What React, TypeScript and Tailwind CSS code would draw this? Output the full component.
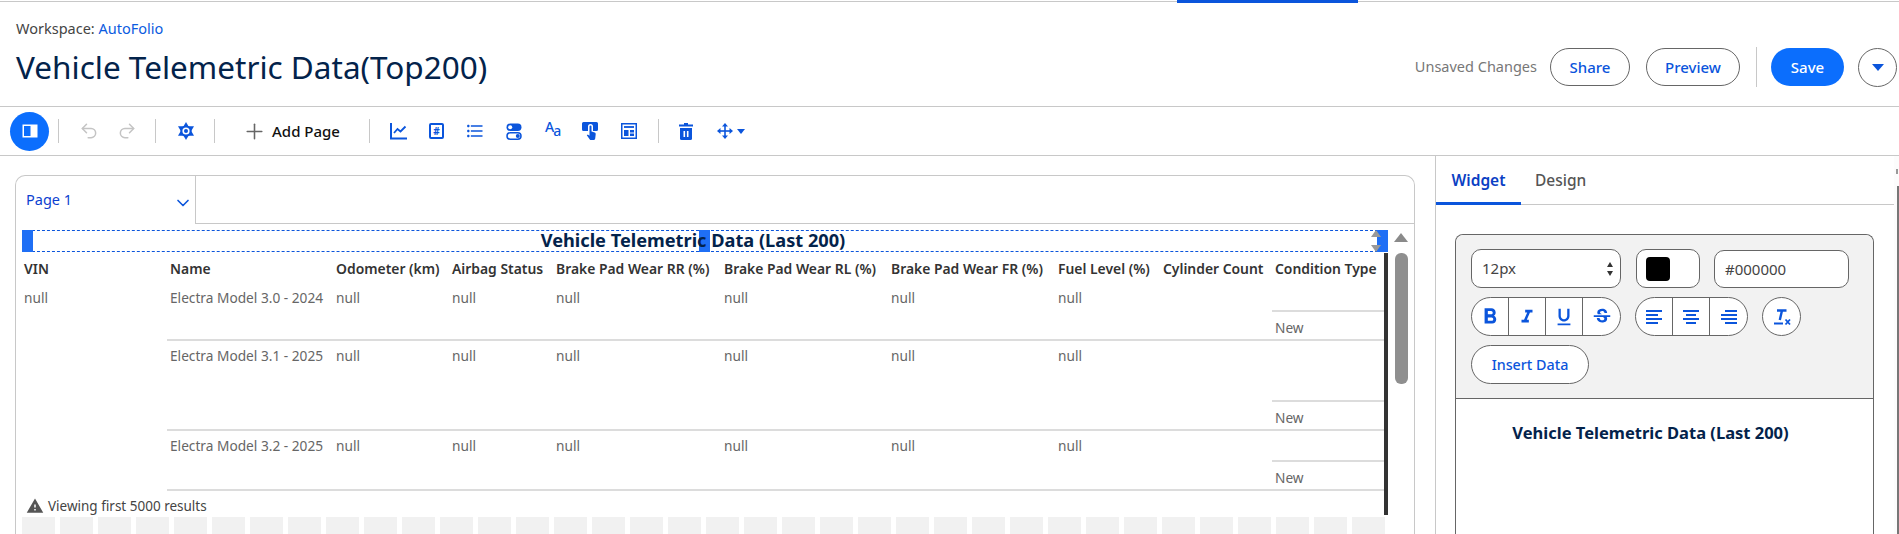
import React from "react";
import { Undo2, Redo2, Plus, ChevronDown } from "lucide-react";
import {
  MdFormatListBulleted,
  MdFormatBold,
  MdFormatItalic,
  MdFormatUnderlined,
  MdStrikethroughS,
  MdWarning,
} from "react-icons/md";

const BLUE = "text-[#0b55dc]";

const Divider = ({ className = "" }: { className?: string }) => (
  <div className={`w-px h-6 bg-[#c8c8c8] ${className}`} />
);

const GearIcon = () => (
  <svg width="16" height="18" viewBox="0 0 16 18">
    <path d="M8 0l8 13.800H0z" fill="#0b55dc" />
    <path d="M8 18L0 4.200h16z" fill="#0b55dc" />
    <circle cx="8" cy="9" r="5.500" fill="#0b55dc" />
    <circle cx="8" cy="9" r="3.600" fill="#fff" />
    <circle cx="8" cy="9" r="2" fill="#0b55dc" />
  </svg>
);

const ChartIcon = () => (
  <svg width="18" height="18" viewBox="0 0 18 18" fill="none" stroke="#0b55dc" strokeWidth="2">
    <path d="M1 1v15.500h16" />
    <path d="M4 11l3.500-4 3 2.500L15.500 4.500" strokeWidth="1.800" />
  </svg>
);

const HashIcon = () => (
  <div className={`w-[15px] h-[16px] border-2 border-[#0b55dc] rounded-[2px] flex items-center justify-center text-[10px] font-bold leading-none ${BLUE}`}>
    #
  </div>
);

const ToggleIcon = () => (
  <svg width="16" height="17" viewBox="0 0 16 17">
    <rect x="0.500" y="0.500" width="15" height="7.500" rx="3.700" fill="#0b55dc" />
    <circle cx="4.200" cy="4.200" r="2" fill="#fff" />
    <rect x="1" y="9.700" width="14" height="6.500" rx="3.200" fill="none" stroke="#0b55dc" strokeWidth="1.500" />
    <circle cx="11.800" cy="13" r="2" fill="#0b55dc" />
  </svg>
);

const TouchIcon = () => (
  <svg width="16" height="18" viewBox="0 0 16 18" fill="#0b55dc">
    <path d="M1.500 0h13A1.500 1.500 0 0 1 16 1.500v6A1.500 1.500 0 0 1 14.500 9H11V4.500a2.500 2.500 0 0 0-5 0V9H1.500A1.500 1.500 0 0 1 0 7.500v-6A1.500 1.500 0 0 1 1.500 0z" />
    <path d="M7.500 4.500a1 1 0 0 1 2 0V9.500l3.200 1c.8.300 1.100.9 1 1.700l-.5 4.300c-.1.900-.7 1.500-1.600 1.500H9c-.5 0-.9-.2-1.200-.6L4.800 13.300l1-.9 1.700 1.300z" />
  </svg>
);

const LayoutIcon = () => (
  <svg width="16" height="16" viewBox="0 0 16 16" fill="none" stroke="#0b55dc">
    <rect x="0.750" y="0.750" width="14.500" height="14.500" strokeWidth="1.500" />
    <path d="M3 4h10" strokeWidth="1.800" />
    <rect x="3" y="7" width="4.500" height="6" fill="#0b55dc" stroke="none" />
    <rect x="9" y="7" width="4" height="2.500" fill="#0b55dc" stroke="none" />
    <rect x="9" y="10.500" width="4" height="2.500" fill="#0b55dc" stroke="none" />
  </svg>
);

const TrashIcon = () => (
  <svg width="14" height="17" viewBox="0 0 14 17" fill="#0b55dc">
    <path d="M5 0h4v1.500h5V3.500H0V1.500h5z" />
    <path d="M1 5h12v10.500a1.500 1.500 0 0 1-1.500 1.500h-9A1.500 1.500 0 0 1 1 15.500z" />
    <rect x="4.500" y="8" width="1.600" height="6" fill="#fff" />
    <rect x="7.900" y="8" width="1.600" height="6" fill="#fff" />
  </svg>
);

const MoveIcon = () => (
  <svg width="16" height="16" viewBox="0 0 16 16" fill="#0b55dc">
    <path d="M7.200 3h1.600v10H7.200z" />
    <path d="M3 7.200h10v1.600H3z" />
    <path d="M8 0l3 3.500H5z" />
    <path d="M8 16l-3-3.500h6z" />
    <path d="M0 8l3.500-3v6z" />
    <path d="M16 8l-3.500 3V5z" />
  </svg>
);

const AlignIcon = ({ lines }: { lines: string[] }) => (
  <svg width="18" height="16" viewBox="0 0 18 16" fill="none" stroke="#0b55dc" strokeWidth="2">
    {lines.map((d) => (
      <path key={d} d={d} />
    ))}
  </svg>
);

const Toolbar = () => (
  <div className="h-[49px] border-b border-[#c8c8c8] flex items-center pl-[10px]">
    <button className="w-[39px] h-[39px] rounded-full bg-[#0b6efd] flex items-center justify-center">
      <svg width="16" height="14" viewBox="0 0 16 14">
        <rect x="0.500" y="0.500" width="15" height="13" fill="#fff" />
        <rect x="2" y="2" width="6.500" height="10" fill="#0b6efd" />
      </svg>
    </button>
    <Divider className="ml-[9px]" />
    <Undo2 size={20} strokeWidth={1.800} className="ml-[20px] text-[#c4c4c4]" />
    <Redo2 size={20} strokeWidth={1.800} className="ml-[18px] text-[#c4c4c4]" />
    <Divider className="ml-[18px]" />
    <div className="ml-[22px]"><GearIcon /></div>
    <Divider className="ml-[20px]" />
    <Plus size={25} strokeWidth={1.500} className="ml-[27px] text-[#666]" />
    <span className="ml-[5px] w-[97px] text-[15px] font-medium text-[#111]">Add Page</span>
    <Divider />
    <div className="ml-[20px] w-[18px]"><ChartIcon /></div>
    <div className="ml-[21px]"><HashIcon /></div>
    <MdFormatListBulleted size={20} className={`ml-[21px] ${BLUE}`} />
    <div className="ml-[21px]"><ToggleIcon /></div>
    <div className={`ml-[23px] w-[16px] flex items-end leading-none font-medium ${BLUE}`}>
      <span className="text-[14px] -mt-[5px] mb-[4px]">A</span>
      <span className="text-[14px] -ml-[1px]">a</span>
    </div>
    <div className="ml-[21px]"><TouchIcon /></div>
    <div className="ml-[23px]"><LayoutIcon /></div>
    <Divider className="ml-[21px]" />
    <div className="ml-[20px]"><TrashIcon /></div>
    <div className="ml-[24px]"><MoveIcon /></div>
    <span className="ml-[4px] w-0 h-0 border-x-[4px] border-x-transparent border-t-[5px] border-t-[#0b55dc]" />
  </div>
);

const Header = () => (
  <div className="relative h-[106px] border-t border-[#c8c8c8] border-b flex justify-between pl-4 pr-[2px] mt-px">
    <div className="absolute left-[1177px] -top-[2px] w-[181px] h-[3px] bg-[#0b55dc]" />
    <div>
      <div className="mt-[17px] text-[14.500px] leading-[18px] text-[#444]">
        Workspace: <span className="text-[#0b5be0]">AutoFolio</span>
      </div>
      <h1 className="mt-[10px] text-[31.500px] leading-[40px] text-[#03234b]">Vehicle Telemetric Data(Top200)</h1>
    </div>
    <div className="flex items-center pt-[26px] gap-[16px]">
      <span className="text-[14.500px] text-[#777] mr-[-3px]">Unsaved Changes</span>
      <button className={`w-[80px] h-[38px] rounded-full border border-[#666] text-[15px] font-medium ${BLUE}`}>Share</button>
      <button className={`w-[94px] h-[38px] rounded-full border border-[#666] text-[15px] font-medium ${BLUE}`}>Preview</button>
      <div className="w-px h-[40px] bg-[#c8c8c8]" />
      <button className="w-[73px] h-[38px] rounded-full bg-[#0b6efd] text-white text-[15px] font-medium -ml-[2px]">Save</button>
      <button className="w-[39px] h-[39px] rounded-full border border-[#666] flex items-center justify-center -ml-[2px]">
        <span className="w-0 h-0 border-x-[6px] border-x-transparent border-t-[7px] border-t-[#0b55dc]" />
      </button>
    </div>
  </div>
);

const columns = [
  { label: "Name", w: "w-[166px]" },
  { label: "Odometer (km)", w: "w-[116px]" },
  { label: "Airbag Status", w: "w-[104px]" },
  { label: "Brake Pad Wear RR (%)", w: "w-[168px]" },
  { label: "Brake Pad Wear RL (%)", w: "w-[167px]" },
  { label: "Brake Pad Wear FR (%)", w: "w-[167px]" },
  { label: "Fuel Level (%)", w: "w-[105px]" },
  { label: "Cylinder Count", w: "w-[112px]" },
  { label: "Condition Type", w: "flex-1" },
];

const rows = [
  { name: "Electra Model 3.0 - 2024", h: "h-[58px]" },
  { name: "Electra Model 3.1 - 2025", h: "h-[90px]" },
  { name: "Electra Model 3.2 - 2025", h: "h-[60px]" },
];

const TableRow = ({ row }: { row: (typeof rows)[number] }) => (
  <div className={`flex ${row.h} border-b-2 border-[#dcdcdc] text-[13.700px] leading-[18px] text-[#666]`}>
    <div className="w-[166px] pl-[3px] pt-[6px] whitespace-nowrap">{row.name}</div>
    <div className="w-[116px] pl-[3px] pt-[6px]">null</div>
    <div className="w-[104px] pl-[3px] pt-[6px]">null</div>
    <div className="w-[168px] pl-[3px] pt-[6px]">null</div>
    <div className="w-[167px] pl-[3px] pt-[6px]">null</div>
    <div className="w-[167px] pl-[3px] pt-[6px]">null</div>
    <div className="w-[105px] pl-[3px] pt-[6px]">null</div>
    <div className="w-[112px]" />
    <div className="flex-1 flex flex-col">
      <div className="flex-1 border-b-2 border-[#dcdcdc]" />
      <div className="h-[27px] pl-[3px] pt-[7px]">New</div>
    </div>
  </div>
);

const skeleton = Array.from({ length: 36 });

const Canvas = () => (
  <div className="flex-1 min-w-0 pl-[15px] pr-[20px] pt-[19px]">
    <div className="h-[400px] border border-[#c8c8c8] rounded-t-[10px] border-b-0">
      <div className="h-[48px] flex">
        <div className="w-[180px] border-r border-[#c8c8c8] flex items-center justify-between pl-[10px] pr-[2px]">
          <span className="text-[14.500px] text-[#0b3fd0]">Page 1</span>
          <ChevronDown size={20} strokeWidth={2} className="text-[#0b55dc] mt-[5px]" />
        </div>
        <div className="flex-1 border-b border-[#c8c8c8]" />
      </div>
      <div className="flex">
        <div className="w-[1372px] pl-[6px] pt-[6px] relative shrink-0">
          <div className="relative h-[22px] pr-[24px] border-y border-dashed border-[#0b55dc] flex items-center justify-center text-[18.200px] font-bold text-[#03234b] whitespace-nowrap">
            <span className="relative z-10">Vehicle Telemetric Data (Last 200)</span>
            <span className="absolute left-0 -top-px w-[11px] h-[22px] bg-[#1f6ff5]" />
            <span className="absolute left-[677px] -top-px w-[11px] h-[22px] bg-[#1f6ff5]" />
            <span className="absolute right-0 -top-px w-[11px] h-[22px] bg-[#1f6ff5]" />
            <span className="absolute right-[7px] top-[-1px] w-0 h-0 border-x-[5px] border-x-transparent border-b-[7px] border-b-[#999]" />
            <span className="absolute right-[7px] bottom-[-1px] w-0 h-0 border-x-[5px] border-x-transparent border-t-[7px] border-t-[#999]" />
          </div>
          <div className="relative h-[262px] mt-[1px] border-r-4 border-[#333] flex overflow-hidden">
            <div className="w-[145px] shrink-0 pl-[2px]">
              <div className="h-[30px] pt-[7px] text-[13.900px] leading-[18px] font-semibold text-[#333]">VIN</div>
              <div className="pt-[6px] text-[13.700px] leading-[18px] text-[#666]">null</div>
            </div>
            <div className="flex-1 min-w-0">
              <div className="flex h-[30px] text-[13.900px] leading-[18px] font-semibold text-[#333]">
                {columns.map((c) => (
                  <div key={c.label} className={`${c.w} pl-[3px] pt-[7px] whitespace-nowrap`}>{c.label}</div>
                ))}
              </div>
              {rows.map((r) => (
                <TableRow key={r.name} row={r} />
              ))}
            </div>
            <div className="absolute left-[4px] top-[244px] flex items-center gap-[4px] text-[13.500px] leading-[18px] text-[#444]">
              <MdWarning size={18} className="text-[#555]" />
              Viewing first 5000 results
            </div>
          </div>
          <div className="flex gap-[5px] mt-[2px] overflow-hidden w-[1366px]">
            {skeleton.map((_, i) => (
              <div key={i} className="w-[33px] h-[18px] shrink-0 bg-[#f1f1f1]" />
            ))}
          </div>
        </div>
        <div className="flex-1 flex flex-col items-center pt-[9px]">
          <span className="w-0 h-0 border-x-[7px] border-x-transparent border-b-[9px] border-b-[#8a8a8a]" />
          <div className="mt-[11px] w-[13px] h-[131px] rounded-[6px] bg-[#8f8f8f]" />
        </div>
      </div>
    </div>
  </div>
);

const Cell = ({ children, last }: { children: React.ReactNode; last?: boolean }) => (
  <div className={`w-[37px] flex items-center justify-center ${last ? "" : "border-r border-[#666]"} ${BLUE}`}>{children}</div>
);

const Panel = () => (
  <div className="w-[459px] shrink-0 border-l border-[#c8c8c8]">
    <div className="h-[49px] flex border-b border-[#c8c8c8] text-[15.500px] font-medium">
      <div className="relative w-[85px] pt-[2px] flex items-center justify-center text-[#0b3fc4] font-semibold">
        Widget
        <span className="absolute left-0 right-0 -bottom-px h-[3px] bg-[#0b55dc]" />
      </div>
      <div className="ml-[14px] pt-[2px] flex items-center text-[#555]">Design</div>
    </div>
    <div className="pl-[19px] pt-[29px]">
      <div className="w-[419px] h-[400px] border border-[#666] rounded-t-[8px] border-b-0">
        <div className="h-[164px] bg-[#f2f2f2] rounded-t-[8px] border-b border-[#666] pl-[15px] pt-[14px]">
          <div className="flex">
            <div className="w-[150px] h-[39px] bg-white border border-[#666] rounded-[10px] flex items-center justify-between pl-[10px] pr-[7px] text-[15px] text-[#444]">
              12px
              <div className="flex flex-col gap-[4px]">
                <span className="w-0 h-0 border-x-[3px] border-x-transparent border-b-[5px] border-b-[#333]" />
                <span className="w-0 h-0 border-x-[3px] border-x-transparent border-t-[5px] border-t-[#333]" />
              </div>
            </div>
            <div className="ml-[15px] w-[64px] h-[39px] bg-white border border-[#666] rounded-[10px] flex items-center pl-[9px]">
              <div className="w-[24px] h-[24px] bg-black rounded-[4px]" />
            </div>
            <div className="ml-[14px] w-[135px] h-[38px] mt-px bg-white border border-[#666] rounded-[10px] flex items-center pl-[10px] text-[15px] text-[#444]">
              #000000
            </div>
          </div>
          <div className="flex mt-[9px]">
            <div className="flex w-[150px] h-[39px] bg-white border border-[#666] rounded-full overflow-hidden">
              <Cell><MdFormatBold size={26} /></Cell>
              <Cell><MdFormatItalic size={22} /></Cell>
              <Cell><MdFormatUnderlined size={22} /></Cell>
              <Cell last><MdStrikethroughS size={22} /></Cell>
            </div>
            <div className="ml-[14px] flex w-[113px] h-[39px] bg-white border border-[#666] rounded-full overflow-hidden">
              <Cell><AlignIcon lines={["M1 2h16", "M1 6h12", "M1 10h16", "M1 14h12"]} /></Cell>
              <Cell><AlignIcon lines={["M1 2h16", "M4 6h10", "M1 10h16", "M4 14h10"]} /></Cell>
              <Cell last><AlignIcon lines={["M5 2h12", "M1 6h16", "M1 10h16", "M5 14h12"]} /></Cell>
            </div>
            <div className={`ml-[14px] w-[39px] h-[39px] bg-white border border-[#666] rounded-full flex items-center justify-center ${BLUE}`}>
              <svg width="18" height="18" viewBox="0 0 18 18" fill="none" stroke="#0b55dc">
                <path d="M4 2.500h9.500M9 2.500L6.800 12" strokeWidth="2.400" />
                <path d="M1 15.500h9" strokeWidth="2" />
                <path d="M12.500 11.500l4.500 5M17 11.500l-4.500 5" strokeWidth="1.800" />
              </svg>
            </div>
          </div>
          <button className={`mt-[9px] w-[118px] h-[39px] bg-white border border-[#666] rounded-full text-[14.300px] font-medium ${BLUE}`}>
            Insert Data
          </button>
        </div>
        <div className="pt-[22px] pr-[28px] text-center text-[16.500px] font-bold text-[#03234b]">Vehicle Telemetric Data (Last 200)</div>
      </div>
    </div>
  </div>
);

const PageScroll = () => (
  <div className="w-[5px] shrink-0 bg-[#fcfcfc] flex flex-col items-end pt-[13px]">
    <span className="w-[2px] h-[5px] mr-[1px] bg-[#999]" />
    <span className="mt-[12px] w-[2px] h-[400px] bg-[#777]" />
  </div>
);

export default function App() {
  return (
    <div className="h-[534px] overflow-hidden bg-white font-['Noto_Sans','Open_Sans',sans-serif]">
      <Header />
      <Toolbar />
      <div className="flex">
        <Canvas />
        <Panel />
        <PageScroll />
      </div>
    </div>
  );
}
